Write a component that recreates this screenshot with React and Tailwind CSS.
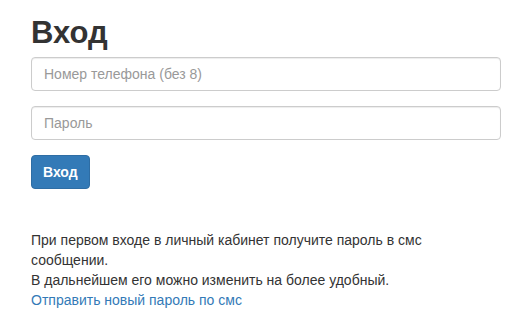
export default function App() {
  return (
    <div className="min-h-screen bg-white pl-[31px] pt-[15px] font-['Liberation_Sans',Arial,sans-serif] text-[#333]">
      <div className="w-[470px]">
        <h1 className="m-0 text-[31px] font-bold leading-[36px] text-[#333]">Вход</h1>
        <form className="mt-[6px] flex flex-col gap-[15px]" onSubmit={(e) => e.preventDefault()}>
          <input
            type="text"
            placeholder="Номер телефона (без 8)"
            className="block h-[34px] w-full rounded-[4px] border border-[#ccc] bg-white px-[12px] text-[14px] text-[#555] shadow-[inset_0_1px_1px_rgba(0,0,0,0.075)] outline-none placeholder:text-[#999]"
          />
          <input
            type="password"
            placeholder="Пароль"
            className="block h-[34px] w-full rounded-[4px] border border-[#ccc] bg-white px-[12px] text-[14px] text-[#555] shadow-[inset_0_1px_1px_rgba(0,0,0,0.075)] outline-none placeholder:text-[#999]"
          />
          <div>
            <button
              type="submit"
              className="h-[34px] rounded-[4px] border border-[#2e6da4] bg-[#337ab7] px-[11px] text-[14px] font-bold text-white"
            >
              Вход
            </button>
          </div>
        </form>
        <div className="mt-[41px] text-[14px] leading-[20px]">
          <p className="m-0">
            При первом входе в личный кабинет получите пароль в смс сообщении.
            <br />
            В дальнейшем его можно изменить на более удобный.
          </p>
          <a href="#" className="text-[#337ab7] no-underline">
            Отправить новый пароль по смс
          </a>
        </div>
      </div>
    </div>
  );
}
